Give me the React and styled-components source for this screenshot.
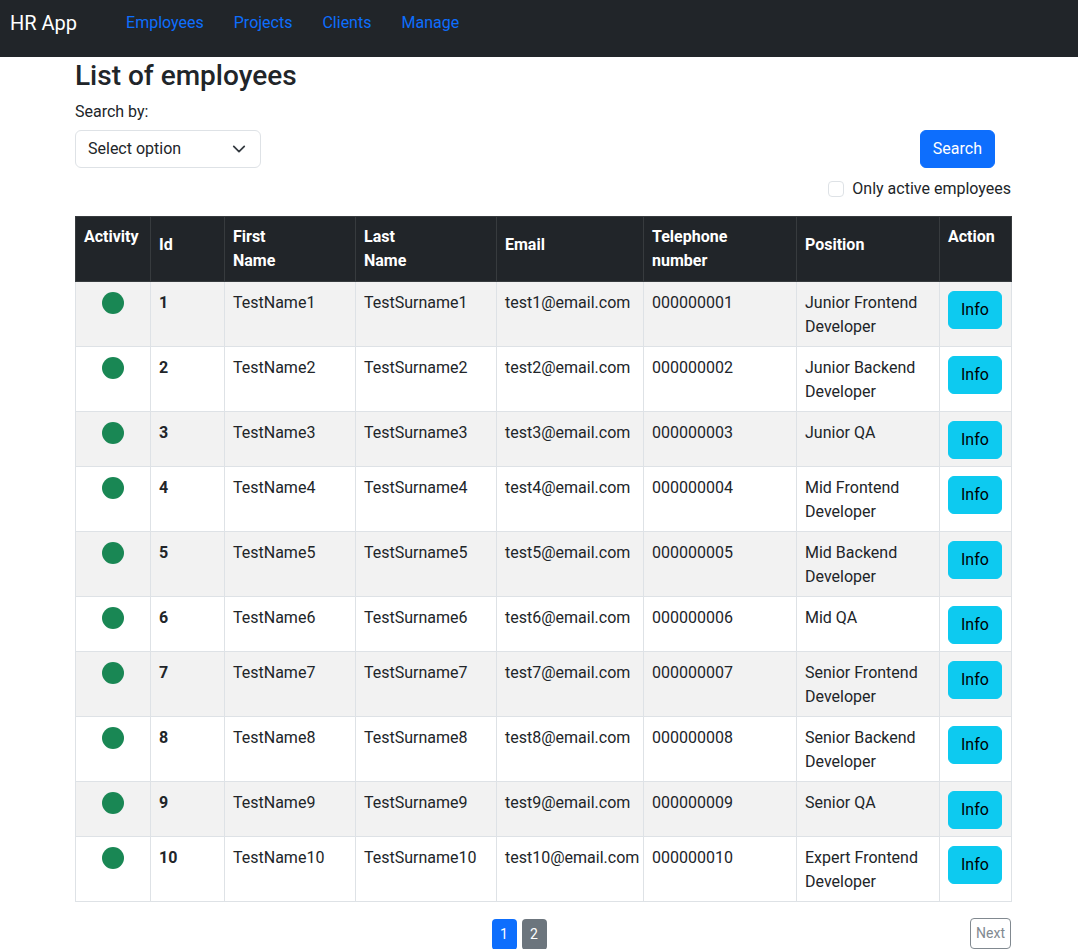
import React from "react";
import styled, { createGlobalStyle } from "styled-components";

const GlobalStyle = createGlobalStyle`
  * { box-sizing: border-box; }
  body {
    margin: 0;
    font-family: "Segoe UI", Roboto, "Noto Sans", sans-serif;
    font-size: 16px;
    line-height: 1.5;
    color: #212529;
    background: #fff;
  }
`;

const NavBar = styled.nav`
  height: 57px;
  background: #212529;
  display: flex;
  align-items: center;
  padding: 0 0 12px 10px;
`;

const Brand = styled.a`
  color: #fff;
  font-size: 20px;
  margin-right: 49px;
  text-decoration: none;
`;

const NavLinks = styled.div`
  display: flex;
  gap: 30px;
`;

const NavLink = styled.a`
  color: #0d6efd;
  text-decoration: none;
`;

const Container = styled.main`
  width: 936px;
  margin-left: 75px;
`;

const Title = styled.h3`
  font-size: 28px;
  font-weight: 500;
  line-height: 1.2;
  margin: 2px 0 7px;
`;

const Label = styled.div`
  margin-bottom: 6px;
`;

const SearchRow = styled.div`
  display: flex;
  justify-content: space-between;
  align-items: center;
  padding-right: 16px;
`;

const Select = styled.div`
  width: 186px;
  height: 38px;
  border: 1px solid #dee2e6;
  border-radius: 6px;
  display: flex;
  align-items: center;
  justify-content: space-between;
  padding: 1px 14px 0 12px;
`;

const Button = styled.button`
  font-family: inherit;
  font-size: 16px;
  line-height: 1.5;
  padding: 6px 12px;
  border-radius: 6px;
  border: 1px solid ${(p) => p.$bg};
  background: ${(p) => p.$bg};
  color: ${(p) => p.$color};
`;

const CheckRow = styled.label`
  display: flex;
  justify-content: flex-end;
  align-items: center;
  gap: 8px;
  margin: 9px 0 15px;
`;

const Check = styled.span`
  width: 16px;
  height: 16px;
  border: 1px solid #dee2e6;
  border-radius: 4px;
`;

const Table = styled.table`
  width: 936px;
  border-collapse: collapse;
  table-layout: fixed;
`;

const Th = styled.th`
  background: #212529;
  color: #fff;
  font-weight: 700;
  text-align: left;
  vertical-align: top;
  padding: ${(p) => (p.$top ? "8px" : "16px")} 8px 8px;
  border: 1px solid #373b3e;
`;

const Row = styled.tr`
  background: ${(p) => (p.$striped ? "#f2f2f2" : "#fff")};
`;

const Td = styled.td`
  padding: 9px 8px 7px;
  vertical-align: top;
  border: 1px solid #dee2e6;
  font-weight: ${(p) => (p.$bold ? 700 : 400)};
  text-align: ${(p) => (p.$center ? "center" : "left")};
  white-space: ${(p) => (p.$nowrap ? "nowrap" : "normal")};
`;

const Dot = styled.span`
  display: inline-block;
  width: 22px;
  height: 22px;
  border-radius: 50%;
  background: #198754;
  margin-top: 1px;
`;

const Footer = styled.div`
  display: grid;
  grid-template-columns: 1fr auto 1fr;
  align-items: start;
  margin-top: 17px;
`;

const Pages = styled.div`
  grid-column: 2;
  display: flex;
  gap: 5px;
  margin-right: 48px;
`;

const PageBtn = styled.span`
  width: 25px;
  height: 31px;
  border-radius: 4px;
  background: ${(p) => (p.$active ? "#0d6efd" : "#6c757d")};
  color: #fff;
  font-size: 14px;
  display: flex;
  align-items: center;
  justify-content: center;
`;

const NextBtn = styled.span`
  grid-column: 3;
  justify-self: end;
  border: 1px solid #6c757d;
  border-radius: 4px;
  color: #6c757d;
  font-size: 14px;
  padding: 4px 5px;
  margin-top: -1px;
  opacity: 0.85;
`;

const positions = [
  "Junior Frontend Developer",
  "Junior Backend Developer",
  "Junior QA",
  "Mid Frontend Developer",
  "Mid Backend Developer",
  "Mid QA",
  "Senior Frontend Developer",
  "Senior Backend Developer",
  "Senior QA",
  "Expert Frontend Developer",
];

const employees = positions.map((position, i) => ({
  id: i + 1,
  first: `TestName${i + 1}`,
  last: `TestSurname${i + 1}`,
  email: `test${i + 1}@email.com`,
  phone: String(i + 1).padStart(9, "0"),
  position,
}));

const columns = [
  { width: 75, lines: ["Activity"], top: true },
  { width: 74, lines: ["Id"] },
  { width: 131, lines: ["First", "Name"], top: true },
  { width: 141, lines: ["Last", "Name"], top: true },
  { width: 147, lines: ["Email"] },
  { width: 153, lines: ["Telephone", "number"], top: true },
  { width: 143, lines: ["Position"] },
  { width: 72, lines: ["Action"], top: true },
];

export default function App() {
  return (
    <>
      <GlobalStyle />
      <NavBar>
        <Brand>HR App</Brand>
        <NavLinks>
          <NavLink>Employees</NavLink>
          <NavLink>Projects</NavLink>
          <NavLink>Clients</NavLink>
          <NavLink>Manage</NavLink>
        </NavLinks>
      </NavBar>
      <Container>
        <Title>List of employees</Title>
        <Label>Search by:</Label>
        <SearchRow>
          <Select>
            <span>Select option</span>
            <svg width="14" height="14" viewBox="0 0 16 16" fill="none">
              <path d="M2 5l6 6 6-6" stroke="#343a40" strokeWidth="2" strokeLinecap="round" strokeLinejoin="round" />
            </svg>
          </Select>
          <Button $bg="#0d6efd" $color="#fff">Search</Button>
        </SearchRow>
        <CheckRow>
          <Check />
          Only active employees
        </CheckRow>
        <Table>
          <colgroup>
            {columns.map((c, i) => (
              <col key={i} style={{ width: c.width }} />
            ))}
          </colgroup>
          <thead>
            <tr>
              {columns.map((c, i) => (
                <Th key={i} $top={c.top}>
                  {c.lines.map((l, j) => (
                    <div key={j}>{l}</div>
                  ))}
                </Th>
              ))}
            </tr>
          </thead>
          <tbody>
            {employees.map((e, i) => (
              <Row key={e.id} $striped={i % 2 === 0}>
                <Td $center><Dot /></Td>
                <Td $bold>{e.id}</Td>
                <Td>{e.first}</Td>
                <Td>{e.last}</Td>
                <Td $nowrap>{e.email}</Td>
                <Td>{e.phone}</Td>
                <Td>{e.position}</Td>
                <Td>
                  <Button $bg="#0dcaf0" $color="#000">Info</Button>
                </Td>
              </Row>
            ))}
          </tbody>
        </Table>
        <Footer>
          <Pages>
            <PageBtn $active>1</PageBtn>
            <PageBtn>2</PageBtn>
          </Pages>
          <NextBtn>Next</NextBtn>
        </Footer>
      </Container>
    </>
  );
}
